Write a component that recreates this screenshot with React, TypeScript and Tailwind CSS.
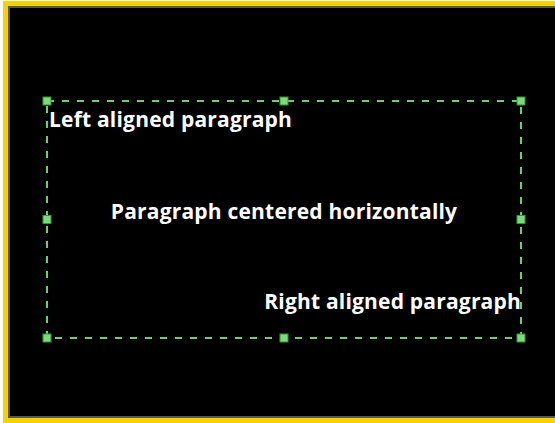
export default function App() {
  const handles = [
    [0, 0], [237, 0], [474, 0],
    [0, 118.5], [474, 118.5],
    [0, 237], [237, 237], [474, 237],
  ];

  return (
    <div className="w-[555px] h-[423px] overflow-hidden bg-white pl-[3px] pt-[1px]">
      <div className="w-[580px] h-[422px] border-[5px] border-r-0 border-[#f5d100]">
        <div className="w-full h-full border-2 border-r-0 border-[#5a5a4c] bg-black pl-[37px] pt-[93px]">
          <div
            className="relative w-[474px] h-[237px] flex flex-col text-white font-bold text-[21px] leading-[28px] tracking-[0.2px]"
            style={{ fontFamily: '"Open Sans", "Noto Sans", sans-serif' }}
          >
            <p className="pt-[4px] pl-[2px] text-left">Left aligned paragraph</p>
            <p className="pt-[64px] text-center">Paragraph centered horizontally</p>
            <p className="pt-[62px] text-right">Right aligned paragraph</p>

            {/* selection overlay */}
            <svg
              className="absolute -left-[5px] -top-[5px] pointer-events-none"
              width={484}
              height={247}
              viewBox="-5 -5 484 247"
            >
              <rect
                x={0}
                y={0}
                width={474}
                height={237}
                fill="none"
                stroke="#6fcf6f"
                strokeWidth={2}
                strokeDasharray="7 8"
              />
              {handles.map(([x, y], i) => (
                <rect
                  key={i}
                  x={x - 4}
                  y={y - 4}
                  width={8}
                  height={8}
                  fill="#7fd87f"
                  stroke="#2e9a2e"
                  strokeWidth={1}
                />
              ))}
            </svg>
          </div>
        </div>
      </div>
    </div>
  );
}
